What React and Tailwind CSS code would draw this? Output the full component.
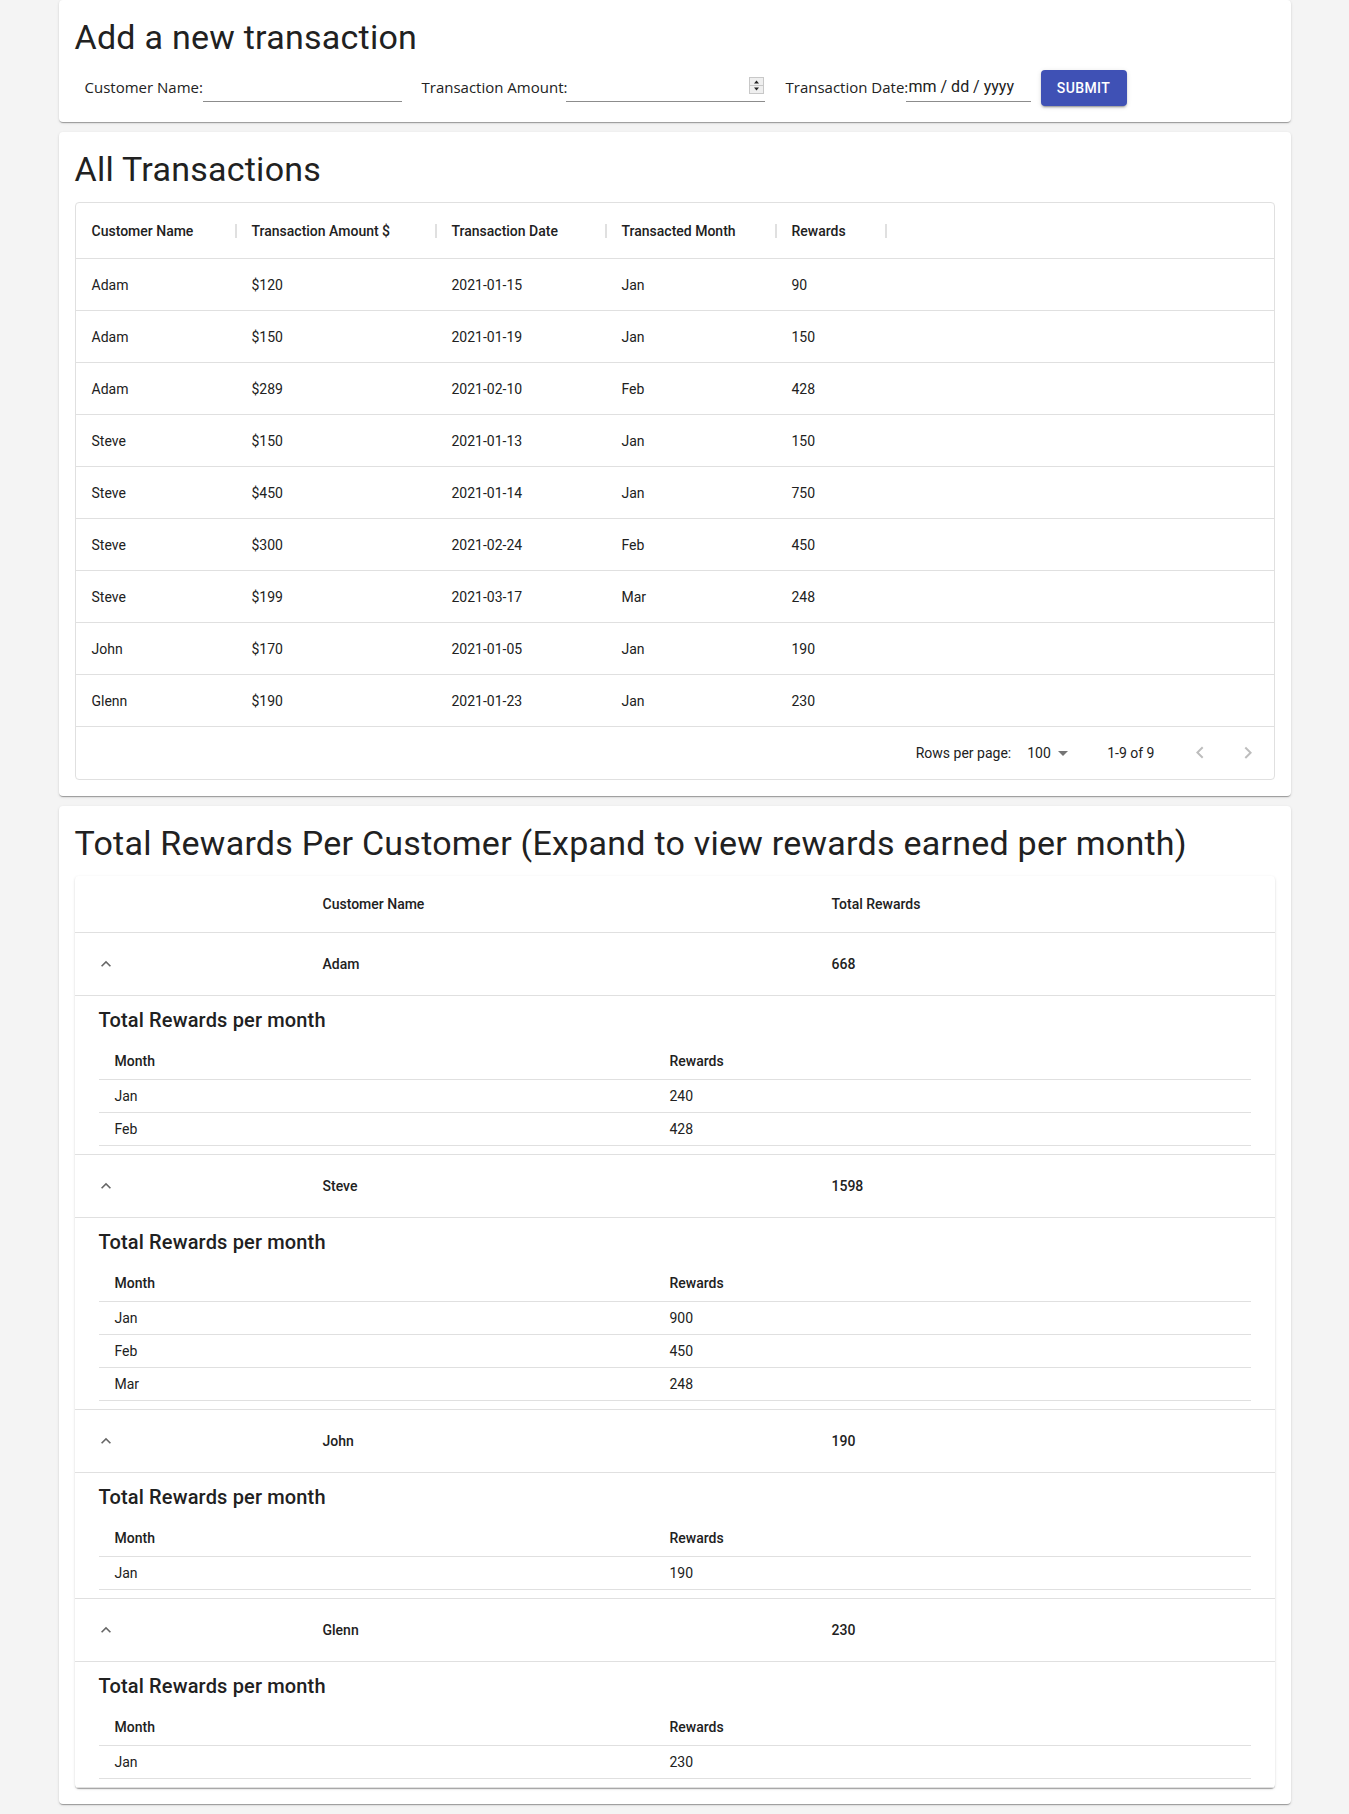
import React from "react";

const transactions = [
  ["Adam", "$120", "2021-01-15", "Jan", "90"],
  ["Adam", "$150", "2021-01-19", "Jan", "150"],
  ["Adam", "$289", "2021-02-10", "Feb", "428"],
  ["Steve", "$150", "2021-01-13", "Jan", "150"],
  ["Steve", "$450", "2021-01-14", "Jan", "750"],
  ["Steve", "$300", "2021-02-24", "Feb", "450"],
  ["Steve", "$199", "2021-03-17", "Mar", "248"],
  ["John", "$170", "2021-01-05", "Jan", "190"],
  ["Glenn", "$190", "2021-01-23", "Jan", "230"],
];

const headers = [
  "Customer Name",
  "Transaction Amount $",
  "Transaction Date",
  "Transacted Month",
  "Rewards",
];
const colW = ["w-[160px]", "w-[200px]", "w-[170px]", "w-[170px]", "w-[110px]"];

const customers = [
  { name: "Adam", total: "668", months: [["Jan", "240"], ["Feb", "428"]] },
  { name: "Steve", total: "1598", months: [["Jan", "900"], ["Feb", "450"], ["Mar", "248"]] },
  { name: "John", total: "190", months: [["Jan", "190"]] },
  { name: "Glenn", total: "230", months: [["Jan", "230"]] },
];

const paper =
  "bg-white rounded-[4px] shadow-[0px_2px_1px_-1px_rgba(0,0,0,0.2),0px_1px_1px_0px_rgba(0,0,0,0.14),0px_1px_3px_0px_rgba(0,0,0,0.12)]";

function Title({ children }) {
  return (
    <h4 className="text-[34px] leading-[42px] tracking-[0.00735em] font-normal mb-3">
      {children}
    </h4>
  );
}

function Spinner() {
  return (
    <svg width="15" height="17" viewBox="0 0 15 17" className="shrink-0">
      <rect x="0.5" y="0.5" width="14" height="16" fill="#efefef" stroke="#c8c8c8" />
      <line x1="1" y1="8.5" x2="14" y2="8.5" stroke="#c8c8c8" />
      <path d="M5 6.5 L7.5 3.5 L10 6.5 Z" fill="#222" />
      <path d="M5 10.5 L7.5 13.5 L10 10.5 Z" fill="#222" />
    </svg>
  );
}

function ArrowUp() {
  return (
    <svg width="20" height="20" viewBox="0 0 24 24" fill="rgba(0,0,0,0.6)">
      <path d="M7.41 15.41L12 10.83l4.59 4.58L18 14l-6-6-6 6z" />
    </svg>
  );
}

export default function App() {
  return (
    <div className="min-h-screen bg-[#f4f4f4] font-['Roboto',sans-serif] text-[#212121]">
      <div className="max-w-[1280px] mx-auto px-6 pb-[10px]">
        {/* Card 1 */}
        <div className={`${paper} p-4`}>
          <Title>Add a new transaction</Title>
          <div className="flex items-start">
            <label className="ml-[10px] w-[118px] h-[32px] flex items-center pt-[2px] whitespace-nowrap font-['Open_Sans',sans-serif] text-[15px] text-[#222]">
              Customer Name:
            </label>
            <div className="w-[199px] h-[32px] border-b border-[#8c8c8c]"></div>
            <label className="ml-[20px] w-[144px] h-[32px] flex items-center pt-[2px] whitespace-nowrap font-['Open_Sans',sans-serif] text-[15px] text-[#222]">
              Transaction Amount:
            </label>
            <div className="w-[199px] h-[32px] border-b border-[#8c8c8c] flex items-center justify-end pr-px">
              <Spinner />
            </div>
            <label className="ml-[21px] w-[120px] h-[32px] flex items-center pt-[2px] whitespace-nowrap font-['Open_Sans',sans-serif] text-[15px] text-[#222]">
              Transaction Date:
            </label>
            <div className="w-[125px] h-[32px] border-b border-[#8c8c8c] flex items-center pl-[3px] pt-[3px] text-base whitespace-nowrap">
              mm / dd / yyyy
            </div>
            <button className="ml-[10px] w-[86px] h-[36px] rounded-[4px] bg-[#3f51b5] text-white text-sm font-medium uppercase tracking-[0.02857em] shadow-[0px_3px_1px_-2px_rgba(0,0,0,0.2),0px_2px_2px_0px_rgba(0,0,0,0.14),0px_1px_5px_0px_rgba(0,0,0,0.12)]">
              Submit
            </button>
          </div>
        </div>

        {/* Card 2 */}
        <div className={`${paper} p-4 mt-[10px]`}>
          <Title>All Transactions</Title>
          <div className="border border-[#e0e0e0] rounded-[4px] text-sm">
            <div className="flex h-[56px] border-b border-[#e0e0e0]">
              {headers.map((h, i) => (
                <div key={h} className={`${colW[i]} flex items-center pl-4`}>
                  <span className="flex-1 font-medium whitespace-nowrap">{h}</span>
                  <span className="w-[2px] h-[14px] bg-[#e0e0e0] mr-[-1px]"></span>
                </div>
              ))}
            </div>
            {transactions.map((r, ri) => (
              <div key={ri} className="flex h-[52px] border-b border-[#e0e0e0]">
                {r.map((c, i) => (
                  <div key={i} className={`${colW[i]} flex items-center pl-4`}>
                    {c}
                  </div>
                ))}
              </div>
            ))}
            <div className="flex h-[52px] items-center justify-end pr-[6px]">
              <span>Rows per page:</span>
              <div className="relative ml-2 mr-8 w-[56px] h-[24px] flex items-center pl-2">
                <span>100</span>
                <svg
                  width="24"
                  height="24"
                  viewBox="0 0 24 24"
                  fill="rgba(0,0,0,0.54)"
                  className="absolute right-0 top-0"
                >
                  <path d="M7 10l5 5 5-5z" />
                </svg>
              </div>
              <span className="mr-[25px]">1-9 of 9</span>
              <div className="w-10 h-10 flex items-center justify-center mr-2">
                <svg width="24" height="24" viewBox="0 0 24 24" fill="rgba(0,0,0,0.26)">
                  <path d="M15.41 16.09l-4.58-4.59 4.58-4.59L14 5.5l-6 6 6 6z" />
                </svg>
              </div>
              <div className="w-10 h-10 flex items-center justify-center">
                <svg width="24" height="24" viewBox="0 0 24 24" fill="rgba(0,0,0,0.26)">
                  <path d="M8.59 16.34l4.58-4.59-4.58-4.59L10 5.75l6 6-6 6z" />
                </svg>
              </div>
            </div>
          </div>
        </div>

        {/* Card 3 */}
        <div className={`${paper} p-4 mt-[10px]`}>
          <Title>Total Rewards Per Customer (Expand to view rewards earned per month)</Title>
          <div className={paper}>
            <table className="w-full table-fixed border-collapse text-sm">
              <colgroup>
                <col className="w-[232px]" />
                <col className="w-[509px]" />
                <col />
              </colgroup>
              <thead>
                <tr>
                  <th className="p-4 border-b border-[#e0e0e0]"></th>
                  <th className="p-4 border-b border-[#e0e0e0] text-left font-medium leading-6">
                    Customer Name
                  </th>
                  <th className="p-4 border-b border-[#e0e0e0] text-left font-medium leading-6">
                    Total Rewards
                  </th>
                </tr>
              </thead>
              <tbody>
                {customers.map((c) => (
                  <React.Fragment key={c.name}>
                    <tr>
                      <td className="p-4 border-b border-[#e0e0e0]">
                        <div className="w-[30px] h-[30px] flex items-center justify-center">
                          <ArrowUp />
                        </div>
                      </td>
                      <td className="p-4 border-b border-[#e0e0e0] font-medium leading-5">
                        {c.name}
                      </td>
                      <td className="p-4 border-b border-[#e0e0e0] font-medium leading-5">
                        {c.total}
                      </td>
                    </tr>
                    <tr>
                      <td colSpan={3} className="px-4 py-0 border-b border-[#e0e0e0]">
                        <div className="m-2">
                          <h6 className="text-xl font-medium leading-8 tracking-[0.0075em] mb-[7px]">
                            Total Rewards per month
                          </h6>
                          <table className="w-full table-fixed border-collapse">
                            <colgroup>
                              <col className="w-[555px]" />
                              <col />
                            </colgroup>
                            <thead>
                              <tr>
                                <th className="px-4 py-[6px] border-b border-[#e0e0e0] text-left font-medium leading-6">
                                  Month
                                </th>
                                <th className="px-4 py-[6px] border-b border-[#e0e0e0] text-left font-medium leading-6">
                                  Rewards
                                </th>
                              </tr>
                            </thead>
                            <tbody>
                              {c.months.map(([m, r]) => (
                                <tr key={m}>
                                  <td className="px-4 py-[6px] border-b border-[#e0e0e0] leading-5">
                                    {m}
                                  </td>
                                  <td className="px-4 py-[6px] border-b border-[#e0e0e0] leading-5">
                                    {r}
                                  </td>
                                </tr>
                              ))}
                            </tbody>
                          </table>
                        </div>
                      </td>
                    </tr>
                  </React.Fragment>
                ))}
              </tbody>
            </table>
          </div>
        </div>
      </div>
    </div>
  );
}
